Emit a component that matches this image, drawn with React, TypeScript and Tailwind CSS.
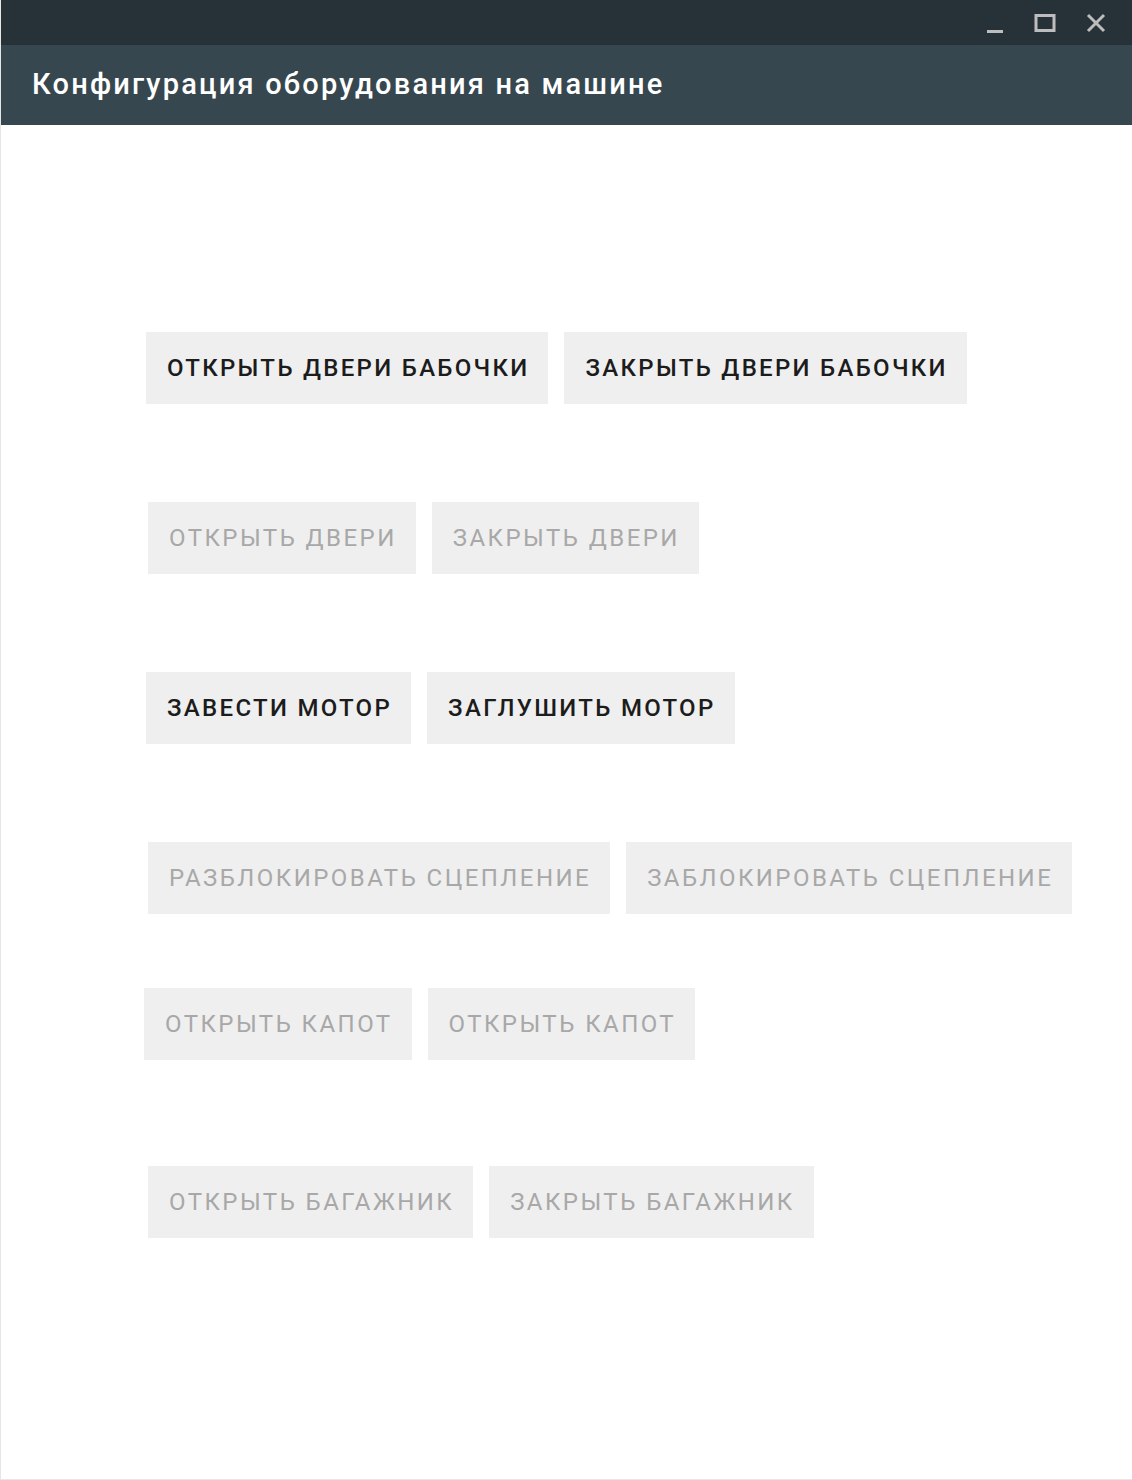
const rows: { items: string[]; active: boolean; cls: string }[] = [
  { items: ["Открыть двери бабочки", "Закрыть двери бабочки"], active: true, cls: "mt-[207px] ml-[145px]" },
  { items: ["Открыть двери", "Закрыть двери"], active: false, cls: "mt-[98px] ml-[147px]" },
  { items: ["Завести мотор", "Заглушить мотор"], active: true, cls: "mt-[98px] ml-[145px]" },
  { items: ["Разблокировать сцепление", "Заблокировать сцепление"], active: false, cls: "mt-[98px] ml-[147px]" },
  { items: ["Открыть капот", "Открыть капот"], active: false, cls: "mt-[74px] ml-[143px]" },
  { items: ["Открыть багажник", "Закрыть багажник"], active: false, cls: "mt-[106px] ml-[147px]" },
];

function WindowControls() {
  return (
    <div className="flex items-center gap-[30px] pr-[26px] text-[#bdbdbd]">
      <svg width="18" height="18" viewBox="0 0 18 18" className="mt-[6px]">
        <rect x="1" y="13" width="16" height="3" fill="currentColor" />
      </svg>
      <svg width="22" height="18" viewBox="0 0 22 18">
        <rect x="2" y="1.5" width="18" height="15" fill="none" stroke="currentColor" strokeWidth="3" />
      </svg>
      <svg width="20" height="20" viewBox="0 0 20 20">
        <path d="M2 2 L18 18 M18 2 L2 18" stroke="currentColor" strokeWidth="3" />
      </svg>
    </div>
  );
}

export default function App() {
  return (
    <div
      className="w-[1132px] h-[1480px] bg-white flex flex-col border-l border-b border-[#e6e6e6]"
      style={{ fontFamily: "Roboto, 'Noto Sans', sans-serif" }}
    >
      <div className="h-[45px] bg-[#263238] flex items-center justify-end">
        <WindowControls />
      </div>
      <div className="h-[80px] bg-[#37474f] flex items-center pl-[31px]">
        <h1 className="text-white text-[29px] font-medium tracking-[2.2px]">
          Конфигурация оборудования на машине
        </h1>
      </div>
      <div className="flex flex-col">
        {rows.map((row, i) => (
          <div key={i} className={`flex gap-[16px] ${row.cls}`}>
            {row.items.map((label, j) => (
              <button
                key={j}
                className={`h-[72px] pl-[21px] pr-[19px] bg-[#efefef] uppercase text-[24px] ${
                  row.active
                    ? "text-[#1c1c1c] font-medium tracking-[2.3px]"
                    : "text-[#a8a8a8] tracking-[2.45px]"
                }`}
              >
                {label}
              </button>
            ))}
          </div>
        ))}
      </div>
    </div>
  );
}
